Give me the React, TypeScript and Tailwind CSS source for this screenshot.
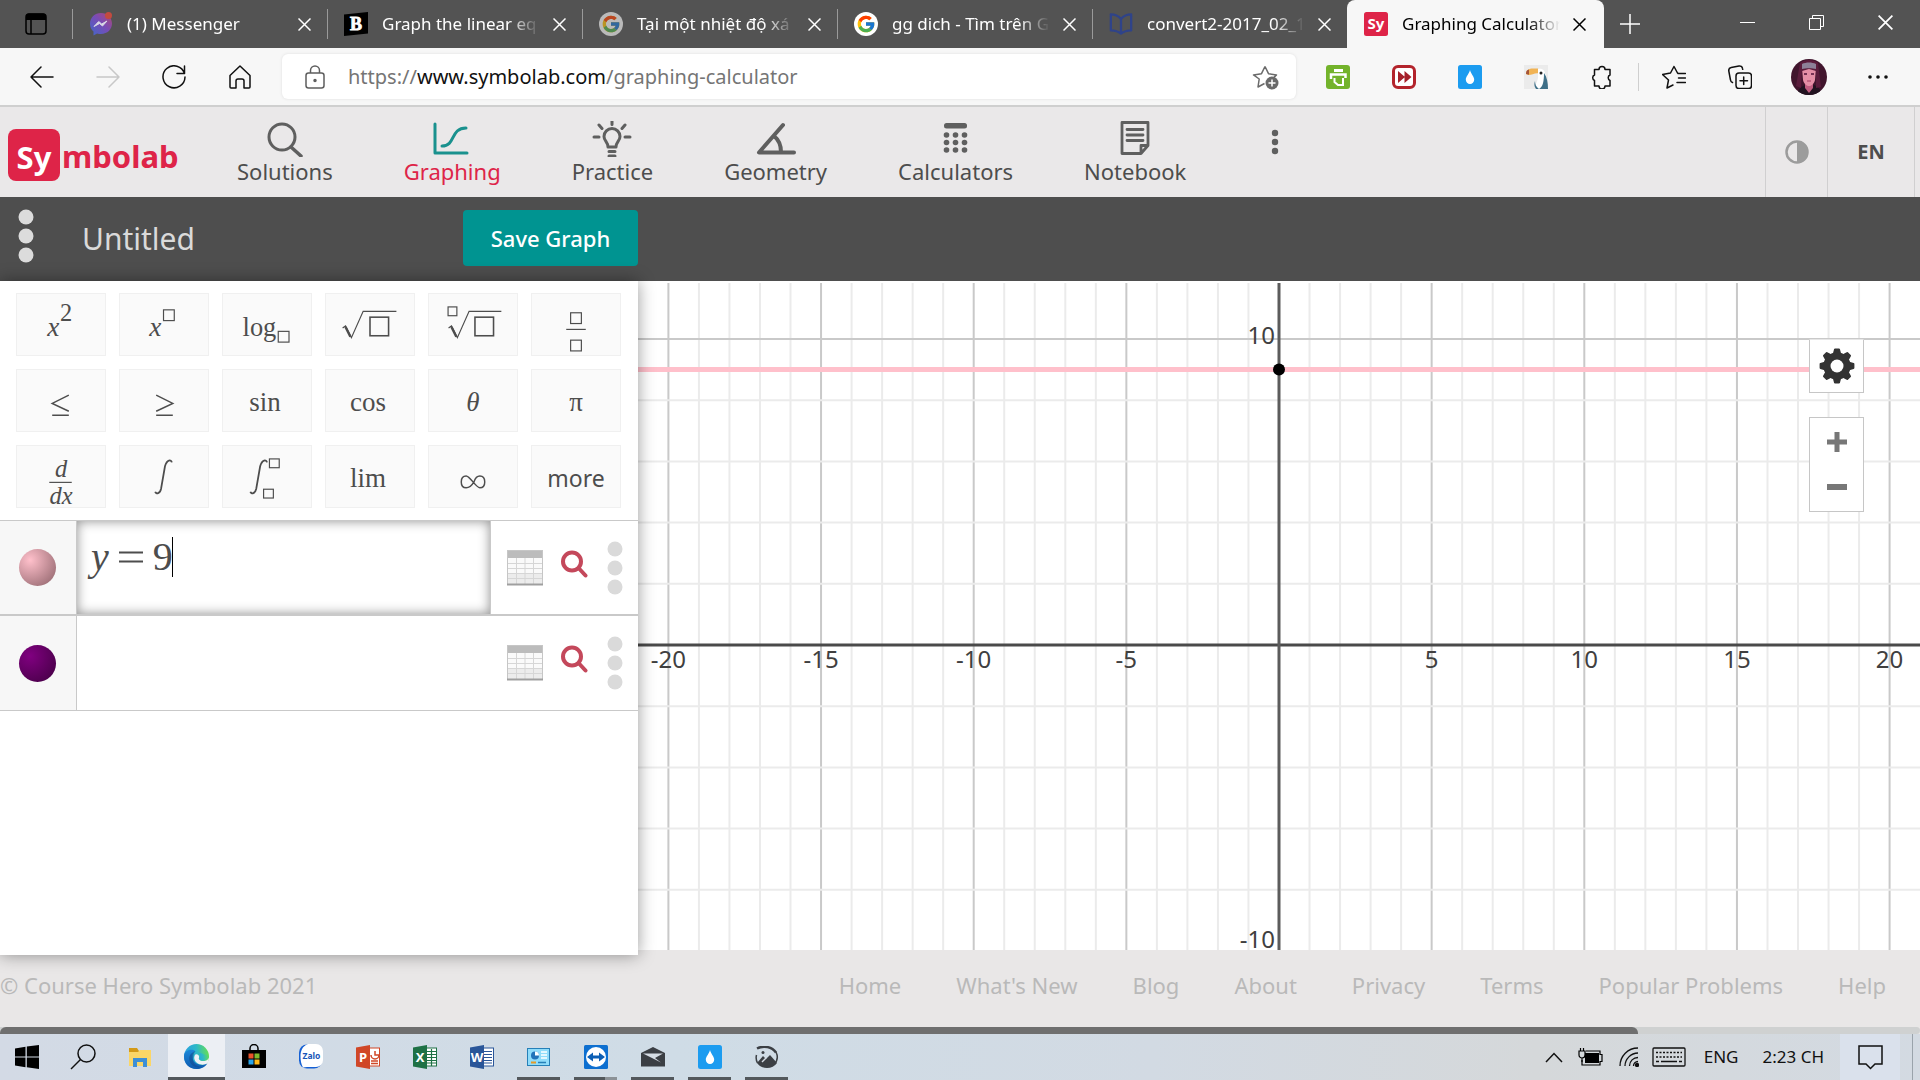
import type { ReactNode } from "react";
import { FcGoogle } from "react-icons/fc";

/* ---------- browser tabs ---------- */

const CloseIcon = ({ size = 13 }: { size?: number }) => (
  <svg width={size} height={size} viewBox="0 0 13 13" fill="none" stroke="currentColor" strokeWidth="1.5" aria-hidden="true">
    <path d="M.5.5l12 12M12.5.5l-12 12" />
  </svg>
);

const MessengerIcon = () => (
  <svg width="24" height="24" viewBox="0 0 24 24" aria-hidden="true">
    <defs>
      <linearGradient id="msg" x1="0" y1="1" x2="1" y2="0">
        <stop offset="0" stopColor="#3f68c9" />
        <stop offset=".55" stopColor="#7a4bb5" />
        <stop offset="1" stopColor="#b0496f" />
      </linearGradient>
    </defs>
    <path d="M12 1C5.600 1 1 5.700 1 11.700c0 3.200 1.300 6 3.500 7.900V23.500l3.600-2c1.200.4 2.600.5 3.900.5 6.400 0 11-4.600 11-10.400S18.400 1 12 1z" fill="url(#msg)" />
    <path d="M5 14.500l4.700-5 3 2.500 5.300-3-4.500 5-3-2.500z" fill="#d9d9e6" stroke="#d9d9e6" />
    <circle cx="19.500" cy="3.500" r="3.500" fill="#c24b3f" />
  </svg>
);

const BrainlyIcon = () => (
  <svg width="24" height="24" viewBox="0 0 24 24" aria-hidden="true">
    <path d="M0 2.500L24 0v21.500L0 24z" fill="#000" />
    <text x="12" y="18" textAnchor="middle" fontSize="18" fontWeight="700" fontFamily="Liberation Serif, serif" fill="#fff" stroke="#fff" strokeWidth=".8">B</text>
  </svg>
);

const GoogleIcon = ({ dim }: { dim?: boolean }) => (
  <span className={dim ? "flex size-6 items-center justify-center rounded-full bg-white opacity-60" : "flex size-6 items-center justify-center rounded-full bg-white"}>
    <FcGoogle size={20} aria-hidden="true" />
  </span>
);

const BookIcon = () => (
  <svg width="26" height="24" viewBox="0 0 26 24" fill="none" stroke="#2f4389" strokeWidth="2.500" strokeLinejoin="round" aria-hidden="true">
    <path d="M2 1.500c4 0 8 1.500 11 5v16c-3-2.500-7-3.500-11-3.500zM24 1.500c-4 0-8 1.500-11 5v16c3-2.500 7-3.500 11-3.500z" />
  </svg>
);

const SymbolabIcon = () => (
  <svg width="24" height="24" viewBox="0 0 24 24" aria-hidden="true">
    <rect width="24" height="24" rx="2.500" fill="#de2448" />
    <text x="12" y="17" textAnchor="middle" fontSize="15" fontWeight="700" fontFamily="Noto Sans, sans-serif" fill="#fff">Sy</text>
  </svg>
);

const tabs: { title: string; icon: ReactNode }[] = [
  { title: "(1) Messenger", icon: <MessengerIcon /> },
  { title: "Graph the linear eq", icon: <BrainlyIcon /> },
  { title: "Tại một nhiệt độ xá", icon: <GoogleIcon dim /> },
  { title: "gg dich - Tìm trên G", icon: <GoogleIcon /> },
  { title: "convert2-2017_02_1", icon: <BookIcon /> },
];

const fade = "[mask-image:linear-gradient(to_right,black_80%,transparent)]";

function TabStrip() {
  return (
    <div className="flex h-12 bg-[#535353] text-[17px] text-white">
      <button aria-label="Tab actions" className="flex w-[72px] shrink-0 items-center justify-center text-black">
        <svg width="22" height="22" viewBox="0 0 22 22" fill="none" stroke="currentColor" aria-hidden="true">
          <rect x="1" y="1" width="20" height="20" rx="3" strokeWidth="1.500" />
          <path d="M1 3.500a3 3 0 013-3h14a3 3 0 013 3V7H1z" fill="currentColor" stroke="none" />
          <path d="M6 6v15" strokeWidth="1.500" />
        </svg>
      </button>
      {tabs.map((t) => (
        <div key={t.title} className="flex w-[255px] min-w-0 items-center">
          <span className="h-[30px] w-px shrink-0 bg-[#9a9a9a]" />
          <span className="ml-4 flex w-6 shrink-0 justify-center">{t.icon}</span>
          <span className={`ml-[14px] w-[158px] overflow-hidden whitespace-nowrap ${fade}`}>{t.title}</span>
          <button aria-label={`Close ${t.title}`} className="ml-[13px]"><CloseIcon /></button>
        </div>
      ))}
      <div className="flex w-[257px] items-center rounded-t-lg bg-[#f7f7f7] text-black">
        <span className="ml-[17px] shrink-0"><SymbolabIcon /></span>
        <span className={`ml-[14px] w-[158px] overflow-hidden whitespace-nowrap ${fade}`}>Graphing Calculator</span>
        <button aria-label="Close Graphing Calculator" className="ml-[13px]"><CloseIcon /></button>
      </div>
      <button aria-label="New tab" className="flex w-[52px] items-center justify-center">
        <svg width="20" height="20" viewBox="0 0 20 20" stroke="currentColor" strokeWidth="1.500" aria-hidden="true"><path d="M10 0v20M0 10h20" /></svg>
      </button>
      <div className="ml-auto flex h-11">
        <button aria-label="Minimize" className="flex w-[69px] items-center justify-center">
          <svg width="15" height="15" viewBox="0 0 15 15" stroke="currentColor" aria-hidden="true"><path d="M0 7.500h15" /></svg>
        </button>
        <button aria-label="Restore" className="flex w-[69px] items-center justify-center">
          <svg width="15" height="15" viewBox="0 0 15 15" fill="none" stroke="currentColor" aria-hidden="true"><path d="M.5 3.500h11v11H.5zM3.500 3.500v-3h11v11h-3" /></svg>
        </button>
        <button aria-label="Close window" className="flex w-[69px] items-center justify-center"><CloseIcon size={15} /></button>
      </div>
    </div>
  );
}

/* ---------- browser toolbar ---------- */

const ToolButton = ({ label, wide, children }: { label: string; wide?: boolean; children: ReactNode }) => (
  <button aria-label={label} className={wide ? "flex w-[72px] shrink-0 items-center justify-center" : "flex w-[66px] shrink-0 items-center justify-center"}>{children}</button>
);

const Line = ({ children, size = 24, width = 1.5 }: { children: ReactNode; size?: number; width?: number }) => (
  <svg width={size} height={size} viewBox="0 0 24 24" fill="none" stroke="currentColor" strokeWidth={width} strokeLinecap="round" strokeLinejoin="round" aria-hidden="true">
    {children}
  </svg>
);

const Avatar = () => (
  <svg width="36" height="36" viewBox="0 0 36 36" aria-hidden="true">
    <defs><clipPath id="av"><circle cx="18" cy="18" r="18" /></clipPath></defs>
    <g clipPath="url(#av)">
      <rect width="36" height="36" fill="#41152d" />
      <path d="M6 36c1-6 4-8 8-10l4 3 5-3c4 2 7 4 8 10z" fill="#221320" />
      <path d="M14 24h8v5l-4 5-4-5z" fill="#c05c80" />
      <path d="M11 9h14l-1 12c-1 4-4 6-6 6s-5-2-6-6z" fill="#e58fa6" />
      <path d="M9 4c5-4 13-4 18 0l3 24-5 1V12l-7-2-7 2-1 17-5-2z" fill="#5b1c3c" />
      <path d="M11 5c4-2 10-2 14 0v5c-4-1-10-1-14 0z" fill="#8d8098" />
      <path d="M13 15h3M20 15h3" stroke="#52153a" strokeWidth="1.500" />
      <path d="M16 22h4" stroke="#a53c62" />
    </g>
  </svg>
);

function Toolbar() {
  return (
    <div className="flex h-[59px] items-stretch border-b-2 border-[#cfcfcf] bg-[#f7f7f7] pl-[9px] pr-[9px] text-[#111]">
      <ToolButton label="Back"><Line><path d="M23 12H1M11 2L1 12l10 10" /></Line></ToolButton>
      <span className="flex text-[#c8c8c8]"><ToolButton label="Forward"><Line><path d="M1 12h22M13 2l10 10-10 10" /></Line></ToolButton></span>
      <ToolButton label="Refresh"><Line><path d="M22.500 8.500A11 11 0 1023 12M22.500 1v7.500H15" /></Line></ToolButton>
      <ToolButton label="Home"><Line><path d="M2 10.500L12 1l10 9.500V22a1 1 0 01-1 1h-5v-7a2 2 0 00-2-2h-4a2 2 0 00-2 2v7H3a1 1 0 01-1-1z" /></Line></ToolButton>
      <div className="my-[6px] ml-[9px] flex min-w-0 flex-1 items-center rounded-md bg-white pl-[23px] pr-[17px] shadow-[0_0_3px_#dedede]">
        <svg width="20" height="24" viewBox="0 0 20 24" fill="none" stroke="#5e5e5e" strokeWidth="1.500" aria-hidden="true">
          <rect x="1" y="8" width="18" height="15" rx="2.500" /><path d="M5.500 8V5.500a4.500 4.500 0 019 0V8" /><circle cx="10" cy="15.500" r="1" fill="#5e5e5e" />
        </svg>
        <div aria-label="Address" className="ml-[23px] flex-1 text-xl text-[#757575]">
          https://<span className="text-[#111]">www.symbolab.com</span>/graphing-calculator
        </div>
        <button aria-label="Add to favorites" className="text-[#6a6a6a]">
          <svg width="27" height="26" viewBox="0 0 27 26" aria-hidden="true">
            <path d="M13 1.500l3.500 7.200 8 1.200-3 3M12.500 18.500L6 22l1.200-8L1.500 9.900l8-1.200L13 1.500" transform="translate(0 1)" fill="none" stroke="currentColor" strokeWidth="1.500" strokeLinejoin="round" />
            <circle cx="20" cy="19" r="6.500" fill="currentColor" />
            <path d="M20 15.500v7M16.500 19h7" stroke="#fff" strokeWidth="1.500" />
          </svg>
        </button>
      </div>
      <div className="ml-[9px] flex">
        <ToolButton label="Print Friendly">
          <svg width="24" height="24" viewBox="0 0 24 24" aria-hidden="true">
            <rect width="24" height="24" rx="3" fill="#73b32b" />
            <path d="M8 4h9v3H8z" fill="#fff" />
            <path d="M5 14V9.500h14.500V13" fill="none" stroke="#fff" strokeWidth="2.500" />
            <path d="M8.500 13v4l3.500 3h5v-7" fill="none" stroke="#fff" strokeWidth="2" />
          </svg>
        </ToolButton>
        <ToolButton label="Video speed">
          <svg width="24" height="24" viewBox="0 0 24 24" aria-hidden="true">
            <rect x="1.500" y="1.500" width="21" height="21" rx="4.500" fill="#fff" stroke="#b3242c" strokeWidth="3" />
            <path d="M6 6l7 6-7 6zM12.500 6l7 6-7 6z" fill="#a5202a" />
          </svg>
        </ToolButton>
        <ToolButton label="Color picker"><DropIcon /></ToolButton>
        <ToolButton label="Toucan">
          <svg width="24" height="24" viewBox="0 0 24 24" aria-hidden="true">
            <rect width="24" height="24" fill="#ebebeb" />
            <path d="M2 9c0-4 3-5.500 7-5.500h5l1 5c-4-1-8 2-11 1.500z" fill="#f1b354" />
            <path d="M2 9c0-3 1-4 3-4.500L5 9.700z" fill="#a4553a" />
            <path d="M14 4c5-1 7 2 7.500 6L24 24H12c-2-5 3-8 2-14z" fill="#fff" />
            <path d="M20 8c3 4 4 10 4 16h-9c4-2 5-8 5-16zM11 16c-1 3-1 5 1 8h3c-3-2-4-5-4-8z" fill="#3f7088" />
            <circle cx="17" cy="8" r="1.500" fill="#222" />
          </svg>
        </ToolButton>
        <ToolButton label="Extensions">
          <Line><path d="M4.500 4.500h4.500a3 3 0 016 0h5v5.500a3 3 0 000 5.500v5.500h-5a3 3 0 01-6 0H4.500v-5.500a3 3 0 010-5.500z" /></Line>
        </ToolButton>
      </div>
      <span className="my-auto ml-[3px] h-7 w-px bg-[#cfcfcf]" />
      <div className="ml-[2px] flex">
        <ToolButton label="Favorites">
          <Line><path d="M16 8.500L15.500 8 12 1.500 8.500 8l-8 1.500 6 5.500L5 23l6-3M16.500 8.500H23.500M16.500 13H23.500M15 17.500h8.500" /></Line>
        </ToolButton>
        <ToolButton label="Collections">
          <Line><rect x="8" y="8" width="15.500" height="15.500" rx="3" /><path d="M15.700 12v7.500M12 15.700h7.500M4.500 17.500a3 3 0 01-2-2.500L.8 6a3 3 0 012.400-3.400L11 1a3 3 0 013.500 2.400l.2.900" /></Line>
        </ToolButton>
        <ToolButton label="Profile" wide><Avatar /></ToolButton>
        <ToolButton label="Settings and more">
          <svg width="20" height="4" viewBox="0 0 20 4" fill="currentColor" aria-hidden="true"><circle cx="2" cy="2" r="1.800" /><circle cx="10" cy="2" r="1.800" /><circle cx="18" cy="2" r="1.800" /></svg>
        </ToolButton>
      </div>
    </div>
  );
}

/* ---------- site header ---------- */

const navItems: { label: string; icon: ReactNode }[] = [
  {
    label: "Solutions",
    icon: <g><circle cx="17" cy="16" r="13" /><path d="M26 26l10 9" strokeWidth="3.500" /></g>,
  },
  {
    label: "Graphing",
    icon: <path d="M3 3v29h32M10 25c14 0 8-18 24-18" />,
  },
  {
    label: "Practice",
    icon: (
      <g>
        <path d="M16 26c0-5-4-6-4-10.500a8 8 0 0116 0c0 4.500-4 5.500-4 10.500zM17 30.500h6M17 35h6" />
        <path d="M20 0v3.500M7 4l3 3.500M33 4l-3 3.500M2 16h5M33 16h5" />
      </g>
    ),
  },
  {
    label: "Geometry",
    icon: <path d="M27 4L3 31.500h35M18 15c5 4 7 10 7 16" strokeWidth="4" />,
  },
  {
    label: "Calculators",
    icon: (
      <g fill="currentColor" stroke="none">
        <rect x="8" y="2" width="23" height="5.500" rx="2.500" />
        {[14, 21.5, 29].map((y) => [10.5, 19.5, 28.5].map((x) => <circle key={`${x}-${y}`} cx={x} cy={y} r="2.800" />))}
      </g>
    ),
  },
  {
    label: "Notebook",
    icon: <path d="M7 1.500h26v23L26 32.500H7zM33 24.500h-7v8M12 8.500h16M12 14h16M12 19.500h16" strokeWidth="2.800" />,
  },
];

function SiteHeader() {
  return (
    <header className="flex h-[90px] items-stretch bg-[#eae8e9] text-[22px] text-[#4d4d4d]">
      <a href="#home" className="mt-[22px] flex w-[229px] items-start pl-2 text-[#de2448]">
        <span className="flex h-[52px] w-[52px] items-center justify-center rounded-lg bg-[#de2448] pt-1 text-[31px] font-bold leading-none text-white">Sy</span>
        <span className="ml-[2px] mt-3 text-[31px] font-bold leading-none">mbolab</span>
      </a>
      <nav className="flex flex-1 gap-[71px] pl-2 pt-[14px]">
        {navItems.map((n) => (
          <a key={n.label} href={`#${n.label.toLowerCase()}`} className="flex flex-col items-center leading-7">
            <svg width="40" height="36" viewBox="0 0 40 36" fill="none" stroke="currentColor" strokeWidth="3" strokeLinecap="round" strokeLinejoin="round" aria-hidden="true"
              className={n.label === "Graphing" ? "text-[#1a918e]" : "text-[#5f5f5f]"}>
              {n.icon}
            </svg>
            <span className={n.label === "Graphing" ? "text-[#de2448]" : ""}>{n.label}</span>
          </a>
        ))}
        <button aria-label="More" className="ml-[14px] self-start pt-2 text-[#5f5f5f]">
          <svg width="8" height="26" viewBox="0 0 8 26" fill="currentColor" aria-hidden="true"><circle cx="4" cy="4" r="3.200" /><circle cx="4" cy="13" r="3.200" /><circle cx="4" cy="22" r="3.200" /></svg>
        </button>
      </nav>
      <button aria-label="Contrast" className="flex w-[62px] items-center justify-center border-l border-[#d0cfd0]">
        <svg width="24" height="24" viewBox="0 0 24 24" aria-hidden="true"><circle cx="12" cy="12" r="10.500" fill="none" stroke="#9c9c9c" strokeWidth="2.500" /><path d="M12 1a11 11 0 010 22z" fill="#9c9c9c" /></svg>
      </button>
      <button className="mr-[5px] flex w-[88px] items-center justify-center border-x border-[#d0cfd0] text-xl font-bold">EN</button>
    </header>
  );
}

/* ---------- graph title bar ---------- */

const Dots = ({ color }: { color: string }) => (
  <svg width="16" height="54" viewBox="0 0 16 54" fill={color} aria-hidden="true"><circle cx="8" cy="8" r="7.500" /><circle cx="8" cy="27" r="7.500" /><circle cx="8" cy="46" r="7.500" /></svg>
);

function TitleBar() {
  return (
    <div className="flex h-[84px] items-start bg-[#4e4e4e]">
      <button aria-label="Graph menu" className="ml-[18px] mt-3"><Dots color="#dcdcdc" /></button>
      <h1 className="ml-12 mt-[22px] w-[381px] text-[30px] leading-10 text-[#dadada]">Untitled</h1>
      <button className="mt-[13px] h-14 w-[175px] rounded bg-[#009491] text-[22px] font-medium text-white">Save Graph</button>
    </div>
  );
}

/* ---------- keypad ---------- */

const Box = ({ x, y, w = 11, h = 11 }: { x: number; y: number; w?: number; h?: number }) => (
  <rect x={x + 0.5} y={y + 0.5} width={w} height={h} />
);

const Glyph = ({ children }: { children: ReactNode }) => (
  <svg width="90" height="64" viewBox="0 0 90 64" fill="none" stroke="#4d4d4d" strokeWidth="1.200" aria-hidden="true">{children}</svg>
);

const serif = { fontFamily: "Liberation Serif, serif", fill: "#4d4d4d", stroke: "none" };
const Integral = ({ x }: { x: number }) => (
  <path transform={`translate(${x} 14)`} d="M18 3c-.5-3-5-3-7 4L7 30c-1 5-5 6-6 3" strokeWidth="1.800" />
);

const keys: { label: string; face: ReactNode }[] = [
  {
    label: "x squared",
    face: <Glyph><text {...serif} x="31" y="43" fontSize="28" fontStyle="italic">x</text><text {...serif} x="44" y="28" fontSize="25">2</text></Glyph>,
  },
  {
    label: "x to a power",
    face: <Glyph><text {...serif} x="30" y="43" fontSize="28" fontStyle="italic">x</text><Box x={44} y={16} /></Glyph>,
  },
  {
    label: "logarithm with base",
    face: <Glyph><text {...serif} x="20" y="43" fontSize="27">log</text><Box x={56} y={38} /></Glyph>,
  },
  {
    label: "square root",
    face: <Glyph><path d="M17 35l3-2 6 12L38 18h34" /><path d="M20 34l5 10" strokeWidth="2.500" /><rect x="45" y="24" width="19" height="19" strokeWidth="1.600" /></Glyph>,
  },
  {
    label: "nth root",
    face: <Glyph><path d="M20 35l3-2 6 12L41 18h33" /><path d="M23 34l5 10" strokeWidth="2.500" /><rect x="47" y="24" width="19" height="19" strokeWidth="1.600" /><Box x={19} y={13} w={9} h={9} /></Glyph>,
  },
  {
    label: "fraction",
    face: <Glyph><Box x={39} y={19} /><path d="M35 36.500h20" /><Box x={39} y={47} /></Glyph>,
  },
  { label: "less than or equal", face: <Glyph><path d="M53 26L36 34.500l17 8M36 46.500h17" strokeWidth="1.500" /></Glyph> },
  { label: "greater than or equal", face: <Glyph><path d="M37 26l17 8.500-17 8M37 46.500h17" strokeWidth="1.500" /></Glyph> },
  { label: "sine", face: <span className="pr-1 pt-1">sin</span> },
  { label: "cosine", face: <span className="pr-1 pt-1">cos</span> },
  { label: "theta", face: <span className="pt-1 italic">θ</span> },
  { label: "pi", face: <span className="pt-1">π</span> },
  {
    label: "derivative",
    face: <Glyph><text {...serif} x="45" y="32" fontSize="25" fontStyle="italic" textAnchor="middle">d</text><path d="M33 37.500h23" /><text {...serif} x="45" y="60" fontSize="25" fontStyle="italic" textAnchor="middle">dx</text></Glyph>,
  },
  { label: "integral", face: <Glyph><Integral x={35} /></Glyph> },
  { label: "definite integral", face: <Glyph><Integral x={27} /><Box x={47} y={13} w={10} h={9} /><Box x={41} y={44} w={10} h={9} /></Glyph> },
  { label: "limit", face: <span className="pr-1 pt-1">lim</span> },
  {
    label: "infinity",
    face: <Glyph><path d="M46 37c-3 5-6 6-8 6-3 0-5-2-5-6s2-6 5-6c4 0 10 12 14 12 3 0 5-2 5-6s-2-6-5-6c-3 0-5 3-6 6z" strokeWidth="1.500" /></Glyph>,
  },
  { label: "more", face: <span className="pt-1 text-[23px] [font-family:'Noto_Sans',sans-serif]">more</span> },
];

function Keypad() {
  return (
    <div className="grid grid-cols-6 gap-[13px] px-4 py-3 pr-[17px] text-[27px] text-[#4d4d4d] [font-family:'Liberation_Serif',serif]">
      {keys.map((k) => (
        <button key={k.label} aria-label={k.label} className="flex h-[63px] items-center justify-center border border-[#f0f0f0] bg-[#fafafa]">
          {k.face}
        </button>
      ))}
    </div>
  );
}

/* ---------- function rows ---------- */

const TableIcon = () => (
  <svg width="36" height="36" viewBox="0 0 36 36" aria-hidden="true">
    <rect x=".5" y=".5" width="35" height="34" fill="#fafafa" stroke="#c6c6c6" />
    <rect x="1" y="1" width="34" height="7" fill="#bcbcbc" />
    <rect x="1" y="24" width="34" height="10" fill="#ececec" />
    <path d="M1 13.500h34M1 18.500h34M1 23.500h34M1 28.500h34M9.500 8v26M18 8v26M26.500 8v26" stroke="#d6d6d6" />
    <path d="M0 34.500h36" stroke="#9f9f9f" strokeWidth="2" />
  </svg>
);

const ZoomIcon = () => (
  <svg width="28" height="28" viewBox="0 0 28 28" fill="none" stroke="#c4485b" strokeLinecap="round" aria-hidden="true">
    <circle cx="12" cy="11.500" r="9" strokeWidth="4" /><path d="M19 18.500l6.500 7" strokeWidth="4" />
  </svg>
);

function FunctionRow({ name, ball, focused, children }: { name: string; ball: string; focused?: boolean; children?: ReactNode }) {
  return (
    <div className={focused ? "flex h-[95px] border-b-2 border-[#c9c9c9]" : "flex h-[95px] border-b border-[#c9c9c9]"}>
      <button aria-label={`${name} colour`} className="flex w-[77px] shrink-0 items-center justify-center border-r border-[#c9c9c9] bg-[#f7f7f7] pr-[2px]">
        <span className={`size-[37px] rounded-full ${ball}`} />
      </button>
      <label className={focused ? "relative block w-[414px] border-r border-[#c9c9c9] bg-white shadow-[inset_0_0_12px_#8f8f8f]" : "relative block w-[414px]"}>
        {children}
        <input aria-label={name} className="absolute inset-0 bg-transparent px-3 text-[40px] outline-none" />
      </label>
      <div className="flex flex-1 items-center pl-4">
        <button aria-label={`${name} table`}><TableIcon /></button>
        <button aria-label={`${name} zoom`} className="mb-2 ml-[17px]"><ZoomIcon /></button>
        <button aria-label={`${name} options`} className="ml-[19px]"><Dots color="#dadada" /></button>
      </div>
    </div>
  );
}

function FunctionPanel() {
  return (
    <aside className="relative z-10 -mb-[5px] w-[638px] shrink-0 bg-white shadow-[0_0_16px_rgba(0,0,0,0.4)]">
      <Keypad />
      <div className="border-t border-[#c9c9c9]">
        <FunctionRow name="Function 1" focused ball="bg-[radial-gradient(circle_at_30%_30%,#ffc0cb,#8a5f66)]">
          <span className="flex items-center pl-[14px] pt-3 text-[40px] leading-[48px] text-[#4d4d4d] [font-family:'Liberation_Serif',serif]">
            <i>y</i>
            <svg width="24" height="12" viewBox="0 0 24 12" className="ml-[10px]" aria-hidden="true"><path d="M0 1.500h24M0 10.500h24" stroke="#4d4d4d" strokeWidth="2" /></svg>
            <span className="ml-[10px]">9</span>
            <span className="-ml-px h-10 w-px bg-black" />
          </span>
        </FunctionRow>
        <FunctionRow name="Function 2" ball="bg-[radial-gradient(circle_at_30%_30%,#800080,#400040)]" />
      </div>
    </aside>
  );
}

/* ---------- graph ---------- */

const W = 1282;
const H = 669;
const OX = 641;
const OY = 364;
const U = 30.6;
const at = (n: number) => OX + n * 30.53;
const up = (n: number) => OY - n * U;
const range = (a: number, b: number, step: number) => Array.from({ length: Math.floor((b - a) / step) + 1 }, (_, i) => a + i * step);

const gearPath = (() => {
  const pts: string[] = [];
  for (let i = 0; i < 8; i++) {
    for (const [d, r] of [[-0.26, 12.5], [-0.12, 16.5], [0.12, 16.5], [0.26, 12.5]]) {
      const a = (i * Math.PI) / 4 + d - Math.PI / 2;
      pts.push(`${(18 + r * Math.cos(a)).toFixed(1)},${(18 + r * Math.sin(a)).toFixed(1)}`);
    }
  }
  return `M${pts.join("L")}Z`;
})();

function Graph() {
  return (
    <section aria-label="Graph" className="relative min-w-0 flex-1 bg-white">
      <svg viewBox={`0 0 ${W} ${H}`} preserveAspectRatio="xMidYMid slice" className="block h-full w-full" role="img" aria-label="Graph of y = 9">
        {range(-20, 20, 1).map((n) => (
          <path key={n} d={`M${at(n)} 2V${H}`} stroke={n % 5 ? "#ebebeb" : "#c9c9c9"} strokeWidth="2" />
        ))}
        {range(-8, 10, 2).map((n) => (
          <path key={n} d={`M0 ${up(n)}H${W}`} stroke={n % 10 ? "#ebebeb" : "#c9c9c9"} strokeWidth="2" />
        ))}
        <path d={`M0 ${up(9)}H${W}`} stroke="#ffc0cb" strokeWidth="5" />
        <path d={`M0 ${OY}H${W}`} stroke="#4a4a4a" strokeWidth="3" />
        <path d={`M${OX} 2V${H}`} stroke="#5c5c5c" strokeWidth="3" />
        <circle cx={OX} cy={up(9)} r="6" fill="#000" />
        <g fontSize="24" fill="#404040" fontFamily="Noto Sans, sans-serif">
          {[-20, -15, -10, -5, 5, 10, 15, 20].map((n) => (
            <text key={n} x={at(n)} y="387" textAnchor="middle">{n}</text>
          ))}
          <text x={OX - 4} y="63" textAnchor="end">10</text>
          <text x={OX - 4} y="667" textAnchor="end">-10</text>
        </g>
      </svg>
      <div className="absolute right-14 top-[58px] flex w-[55px] flex-col gap-6">
        <button aria-label="Graph settings" className="flex h-[54px] items-center justify-center border border-[#c6c6c6] border-t-[#e6e6e6] bg-white">
          <svg width="36" height="36" viewBox="0 0 36 36" aria-hidden="true">
            <path d={gearPath} fill="#333" stroke="#333" strokeWidth="2" strokeLinejoin="round" />
            <circle cx="18" cy="18" r="13.500" fill="#333" />
            <circle cx="18" cy="18" r="6.500" fill="#fff" />
          </svg>
        </button>
        <div className="flex h-[95px] flex-col border border-[#c6c6c6] bg-white text-[#777]">
          <button aria-label="Zoom in" className="flex h-12 items-center justify-center">
            <svg width="20" height="20" viewBox="0 0 20 20" stroke="currentColor" strokeWidth="5" aria-hidden="true"><path d="M10 0v20M0 10h20" /></svg>
          </button>
          <button aria-label="Zoom out" className="flex h-[42px] items-center justify-center">
            <svg width="20" height="6" viewBox="0 0 20 6" aria-hidden="true"><rect width="20" height="6" fill="currentColor" /></svg>
          </button>
        </div>
      </div>
    </section>
  );
}

/* ---------- footer ---------- */

const links = ["Home", "What's New", "Blog", "About", "Privacy", "Terms", "Popular Problems", "Help"];

function Footer() {
  return (
    <footer className="bg-[#e9e7e7] text-[22px] text-[#b9b9b9]">
      <div className="flex h-[77px] items-center justify-between pb-[6px] pr-[34px]">
        <span>© Course Hero Symbolab 2021</span>
        <nav className="flex gap-[55px]">
          {links.map((l) => <a key={l} href="#footer">{l}</a>)}
        </nav>
      </div>
      <div className="h-[7px] rounded-r-md bg-[#cfd1d1]"><div className="h-[7px] w-[1638px] max-w-full rounded-t-md bg-[#6f6f6f]" /></div>
    </footer>
  );
}

/* ---------- task bar ---------- */

function DropIcon() {
  return (
    <svg width="24" height="24" viewBox="0 0 24 24" aria-hidden="true">
      <rect width="24" height="24" rx="2.500" fill="#1c9cf0" />
      <path d="M12 5c1 4 4.200 6.500 4.200 9.800a4.200 4.200 0 01-8.400 0C7.800 11.500 11 9 12 5z" fill="#fff" />
    </svg>
  );
}

const Office = ({ letter, dark, children }: { letter: string; dark: string; children: ReactNode }) => (
  <svg width="24" height="24" viewBox="0 0 24 24" aria-hidden="true">
    <rect x="12" y="3" width="11.500" height="18" fill="#fff" stroke={dark} />
    {children}
    <path d="M0 2.500L14 0v24L0 21.500z" fill={dark} />
    <text x="7" y="17" textAnchor="middle" fontSize="13" fontWeight="700" fontFamily="Noto Sans, sans-serif" fill="#fff">{letter}</text>
  </svg>
);

const apps: { name: string; state?: "first" | "active" | "open" | "group"; icon: ReactNode }[] = [
  {
    name: "Start",
    state: "first",
    icon: <svg width="24" height="24" viewBox="0 0 24 24" aria-hidden="true"><path d="M0 3.500L10.500 1.800v9.700H0zM11.800 1.600L24 0v11.500H11.800zM0 12.500h10.500v9.700L0 20.500zM11.800 12.500H24V24l-12.200-1.700z" /></svg>,
  },
  {
    name: "Search",
    icon: <svg width="26" height="26" viewBox="0 0 26 26" fill="none" stroke="#111" strokeWidth="1.500" aria-hidden="true"><circle cx="16.500" cy="9.500" r="8.500" /><path d="M10.500 15.500L1 25" /></svg>,
  },
  {
    name: "File Explorer",
    icon: (
      <svg width="24" height="24" viewBox="0 0 24 24" aria-hidden="true">
        <path d="M1 3h8l2 3v4H1z" fill="#d49a17" /><path d="M1 7h9l2-2h11v16H1z" fill="#fbd667" /><path d="M5 22v-9h14v9h-4v-5H9v5z" fill="#3e8fd6" />
      </svg>
    ),
  },
  {
    name: "Edge",
    state: "active",
    icon: (
      <svg width="25" height="25" viewBox="0 0 24 24" aria-hidden="true">
        <defs>
          <linearGradient id="e1" x1="0" y1=".4" x2="1" y2=".3"><stop offset="0" stopColor="#2a9fe0" /><stop offset=".5" stopColor="#2cb8c9" /><stop offset="1" stopColor="#66df52" /></linearGradient>
          <linearGradient id="e2" x1="0" y1="0" x2="0" y2="1"><stop offset="0" stopColor="#1a86d8" /><stop offset="1" stopColor="#0f5bb0" /></linearGradient>
        </defs>
        <circle cx="12" cy="12" r="12" fill="url(#e1)" />
        <path d="M0 12c0-6 7-8 11-5-4 1-4 8 0 11s8 2 11.500.5C20 22.500 16 24 12 24 5 24 0 19 0 12z" fill="url(#e2)" />
        <path d="M9 12c-2 5 2 10 8 10-4 2-12-1-12-8 0-3 2-6 6-7-1 1-2 3-2 5z" fill="#114a8b" opacity=".55" />
        <path d="M24 12c0 4-5 5-8 4-2-1-2-2-1.500-3 .5-2-1.500-3.500-3.500-3-2 2-1.500 6 2 8.500 4 2.500 8 1 9.500 0C23.600 16.500 24 14 24 12z" fill="#eef1f5" />
        <path d="M11 7c3 .5 4.500 3 4 5-.6 2-.6 2.500.5 3.200 3 1.400 8.500.3 8.500-3.700z" fill="url(#e1)" />
      </svg>
    ),
  },
  {
    name: "Microsoft Store",
    icon: (
      <svg width="24" height="25" viewBox="0 0 24 25" aria-hidden="true">
        <path d="M8 7V4.500a4 4 0 018 0V7" fill="none" stroke="#000" strokeWidth="1.500" /><path d="M0 6h24v18H0z" />
        <path d="M6.500 9.500h5v5h-5z" fill="#e8532b" /><path d="M12.500 9.500h5v5h-5z" fill="#7fba2c" /><path d="M6.500 15.500h5v5h-5z" fill="#2aa4e8" /><path d="M12.500 15.500h5v5h-5z" fill="#fcb817" />
      </svg>
    ),
  },
  {
    name: "Zalo",
    icon: (
      <svg width="24" height="25" viewBox="0 0 24 25" aria-hidden="true">
        <rect width="23" height="24" y=".5" rx="8" fill="#1560d4" /><path d="M9 0h8a7 7 0 017 7v9a7 7 0 01-7 7H8l-4 .5C2 20 1.500 16 1.500 12S3 2 9 0z" fill="#fff" />
        <text x="12.500" y="15" textAnchor="middle" fontSize="8.500" fontWeight="700" fontFamily="Noto Sans, sans-serif" fill="#1a56b8">Zalo</text>
      </svg>
    ),
  },
  {
    name: "PowerPoint",
    icon: <Office letter="P" dark="#d04727"><path d="M19 6v4h4a4 4 0 01-4 4 4 4 0 01-4-4M15 16h7M15 18.500h7" fill="none" stroke="#d04727" strokeWidth="1.500" /></Office>,
  },
  {
    name: "Excel",
    icon: <Office letter="X" dark="#1e7145"><path d="M14 6.500h9M14 9.500h9M14 12.500h9M14 15.500h9M14 18h9M18.500 4v17" stroke="#1e7145" strokeWidth="1.200" /></Office>,
  },
  {
    name: "Word",
    icon: <Office letter="W" dark="#2a5699"><path d="M14 6.500h8M14 9.500h8M14 12.500h8M14 15.500h8M14 18h8" stroke="#2a5699" strokeWidth="1.200" /></Office>,
  },
  {
    name: "Control Panel",
    state: "open",
    icon: (
      <svg width="23" height="18" viewBox="0 0 23 18" aria-hidden="true">
        <rect x=".5" y=".5" width="22" height="17" fill="#8fdcfa" stroke="#2680b8" /><circle cx="8" cy="7.500" r="4" fill="#2273b8" /><path d="M8 7.500V3.500a4 4 0 014 4z" fill="#fff" />
        <path d="M14 4h6M14 7h6M14 10h6" stroke="#fff" strokeWidth="1.500" /><path d="M4 14.500h5" stroke="#e59a26" strokeWidth="2" /><path d="M11 14.500h8" stroke="#2680b8" strokeWidth="1.500" />
      </svg>
    ),
  },
  {
    name: "TeamViewer",
    state: "group",
    icon: (
      <svg width="24" height="24" viewBox="0 0 24 24" aria-hidden="true">
        <rect width="24" height="24" rx="1.500" fill="#0d6fd0" /><circle cx="12" cy="12" r="10" fill="#fff" /><path d="M3 12l6-4.500v3h6v-3l6 4.500-6 4.500v-3H9v3z" fill="#0d5fb5" />
      </svg>
    ),
  },
  {
    name: "Mail",
    state: "open",
    icon: <svg width="24" height="20" viewBox="0 0 24 20" fill="#3b3f44" aria-hidden="true"><path d="M0 6l12-6 12 6v13.500H0z" /><path d="M2 6.500h20l-8 4.500 6 4.500L11 11z" fill="#d5dce4" /></svg>,
  },
  { name: "Color picker", state: "open", icon: <DropIcon /> },
  {
    name: "Photos",
    state: "open",
    icon: (
      <svg width="24" height="22" viewBox="0 0 24 22" fill="none" stroke="#3b3f44" aria-hidden="true">
        <path d="M2 2.500C9-1 17 1 21 6.500" strokeWidth="2.500" /><path d="M21 6a11 11 0 01-2 12.500M1.500 9a11 11 0 001 8" strokeWidth="1.500" />
        <path d="M2 17l6-7 3 3 4-4 7 8c-2 3-6 5-10 5s-8-2-10-5z" fill="#3b3f44" stroke="none" /><path d="M7 16l4-4" stroke="#d5dce4" strokeWidth="1.500" /><circle cx="8" cy="6.500" r="1.500" fill="#3b3f44" stroke="none" />
      </svg>
    ),
  },
];

const slot = {
  first: "flex w-[54px] flex-col items-center",
  active: "flex w-[57px] flex-col items-center bg-[#eceff4]",
  plain: "flex w-[57px] flex-col items-center",
};

function TaskBar() {
  return (
    <div className="flex h-[46px] bg-[linear-gradient(to_right,#d3dae5,#cfdce6_35%,#d2dae3_60%,#d5d8da_80%,#d3dae2)] pr-[7px] text-[17px] text-[#111]">
      <div className="flex">
        {apps.map((a) => (
          <button key={a.name} aria-label={a.name} className={a.state === "first" ? slot.first : a.state === "active" ? slot.active : slot.plain}>
            <span className="flex h-[43px] items-center pt-[2px]">{a.icon}</span>
            {a.state === "active" && <span className="h-[3px] w-full bg-[#53585c]" />}
            {a.state === "open" && <span className="h-[3px] w-[43px] bg-[#53585c]" />}
            {a.state === "group" && <span className="flex h-[3px] w-[43px]"><span className="w-[31px] bg-[#53585c]" /><span className="w-3 bg-[#8c9297]" /></span>}
          </button>
        ))}
      </div>
      <div className="ml-auto flex items-center">
        <button aria-label="Show hidden icons">
          <svg width="18" height="11" viewBox="0 0 18 11" fill="none" stroke="currentColor" strokeWidth="1.500" aria-hidden="true"><path d="M1 10l8-8.500 8 8.500" /></svg>
        </button>
        <svg width="25" height="18" viewBox="0 0 25 18" className="ml-[15px]" aria-hidden="true">
          <rect x="7" y="5" width="14" height="10" fill="#000" /><path d="M8 3h14v3.500h2v7h-2V17H4V12" fill="none" stroke="#000" strokeWidth="1.200" />
          <path d="M1 3h6v4a3 3 0 01-6 0zM2.500 0v3M5.500 0v3M4 10v4" fill="#d5d9dc" stroke="#000" strokeWidth="1.200" />
        </svg>
        <svg width="20" height="20" viewBox="0 0 20 20" className="ml-4" fill="none" stroke="#111" strokeWidth="1.300" aria-hidden="true">
          <path d="M1 19C1 9 9 1 19 1M6 19c0-7 6-13 13-13M10.500 19c0-5 4-8.500 8.500-8.500M14.500 19c0-2.500 2-4.500 4.500-4.500" /><circle cx="18" cy="18" r="1.500" fill="#111" />
        </svg>
        <svg width="34" height="20" viewBox="0 0 34 20" className="ml-[13px]" fill="none" stroke="#111" strokeWidth="1.300" aria-hidden="true">
          <rect x="1" y="1" width="32" height="18" rx="1" /><path d="M4 5.500h26M4 10h26" strokeDasharray="2 1.500" /><path d="M4 14.500h3M9 14.500h16M27 14.500h3" />
        </svg>
        <span className="ml-[18px]">ENG</span>
        <span className="ml-6">2:23 CH</span>
        <button aria-label="Notifications" className="ml-4 flex h-full w-[60px] items-center justify-center bg-[#dae1ec]">
          <svg width="25" height="25" viewBox="0 0 25 25" fill="none" stroke="currentColor" strokeWidth="1.500" aria-hidden="true"><path d="M1 1h23v18h-7l-4.500 4.500L8 19H1z" /></svg>
        </button>
        <span className="ml-3 h-full w-px bg-[#9aa3ab]" />
      </div>
    </div>
  );
}

export default function App() {
  return (
    <div className="flex min-h-screen flex-col overflow-x-hidden bg-white [font-family:'Noto_Sans',sans-serif]">
      <TabStrip />
      <Toolbar />
      <SiteHeader />
      <TitleBar />
      <main className="flex flex-1">
        <FunctionPanel />
        <Graph />
      </main>
      <Footer />
      <TaskBar />
    </div>
  );
}
